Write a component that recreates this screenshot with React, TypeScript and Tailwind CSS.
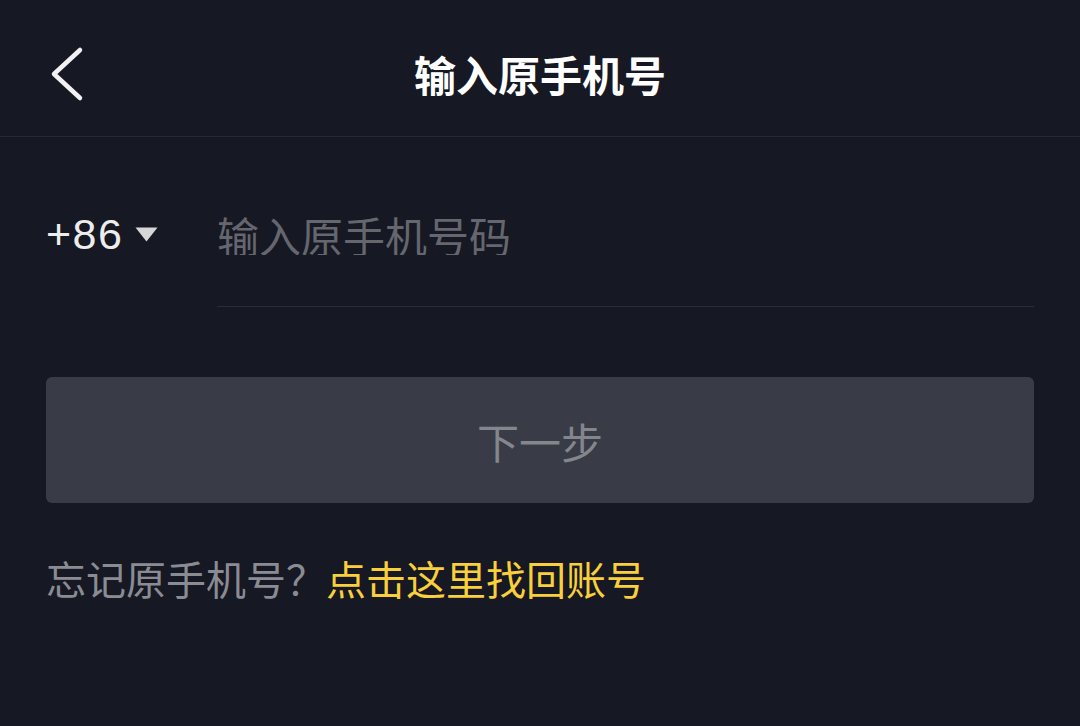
import React from 'react';

const cjk = { fontFamily: '"Noto Sans CJK SC", "Noto Sans", sans-serif' };

const BackIcon: React.FC = () => (
  <svg width="34" height="56" viewBox="0 0 34 56" fill="none">
    <path d="M30 4 L4 28 L30 52" stroke="#f2f2f2" strokeWidth="4.5" strokeLinecap="round" strokeLinejoin="round" />
  </svg>
);

export default function App() {
  return (
    <div className="min-h-[726px] w-full bg-[#161823] text-white" style={cjk}>
      {/* header */}
      <div className="grid h-[137px] grid-cols-[1fr_auto_1fr] items-start border-b border-[#262833]">
        <button className="ml-[50px] mt-[46px] w-[34px]">
          <BackIcon />
        </button>
        <h1 className="mt-[53px] text-[42px] font-bold leading-[42px] text-white">输入原手机号</h1>
        <div />
      </div>

      <div className="px-[46px]">
        {/* phone input */}
        <div className="mt-[76px] flex">
          <div className="flex h-[42px] w-[171px] items-center">
            <span className="font-['Liberation_Sans',Arial,sans-serif] text-[43px] leading-[42px] tracking-[1.5px] text-[#ededed]">+86</span>
            <svg className="ml-[12px] mt-[1px]" width="23" height="15" viewBox="0 0 23 15">
              <path d="M0.5 0.5 H22.5 L11.5 14.5 Z" fill="#d6d6d8" />
            </svg>
          </div>
          <div className="flex-1 border-b border-[#2a2c37] pb-[51px]">
            <input
              className="block h-[42px] w-full bg-transparent text-[42px] leading-[42px] text-white outline-none placeholder:text-[#65666e]"
              placeholder="输入原手机号码"
              style={cjk}
            />
          </div>
        </div>

        {/* next button */}
        <button className="mt-[70px] flex h-[126px] w-full items-center justify-center rounded-[6px] bg-[#393c46] text-[42px] text-[#84868d]">
          下一步
        </button>

        {/* recovery hint */}
        <p className="mt-[55px] text-[40px] leading-[40px] text-[#8b8c93]">
          忘记原手机号？<span className="text-[#f9cf3b]">点击这里找回账号</span>
        </p>
      </div>
    </div>
  );
}
